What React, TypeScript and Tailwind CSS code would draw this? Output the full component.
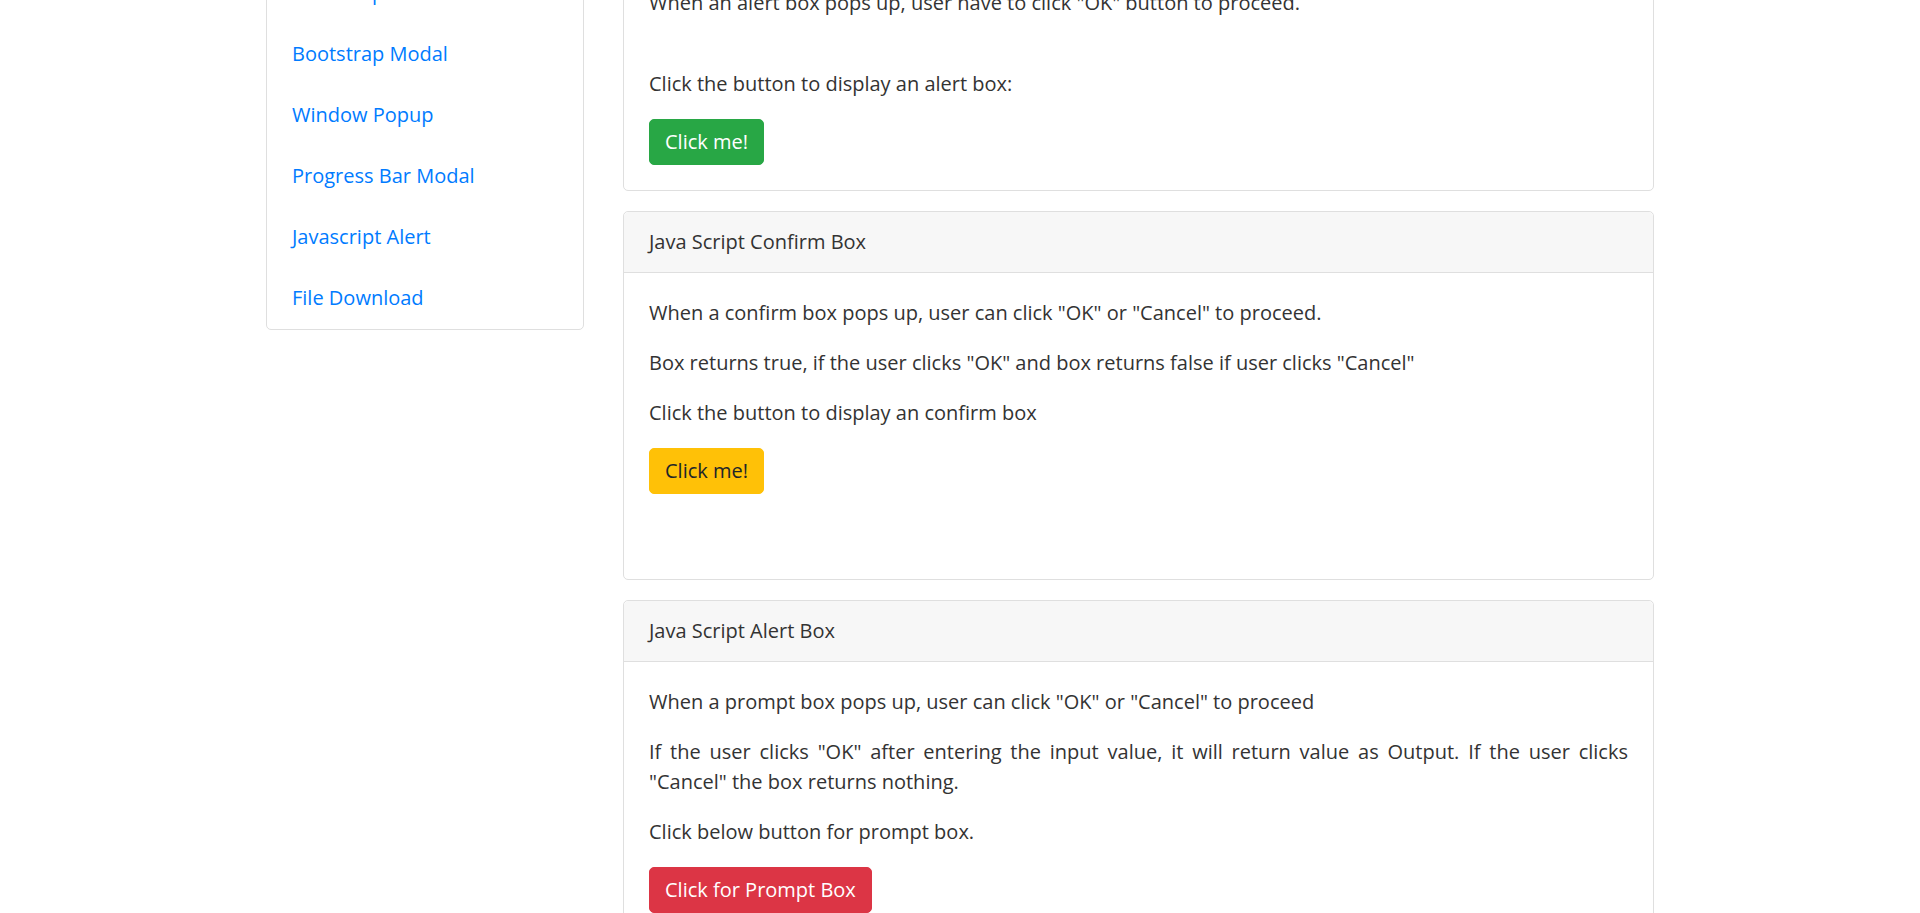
const sideLinks = [
  'Bootstrap Alerts',
  'Bootstrap Alerts',
  'Bootstrap Modal',
  'Window Popup',
  'Progress Bar Modal',
  'Javascript Alert',
  'File Download',
];

function CardHeader({ title }: { title: string }) {
  return (
    <div className="bg-[#f7f7f7] border-b border-[#dfdfdf] px-[25px] py-[15px] leading-[30px] rounded-t-[5px]">
      {title}
    </div>
  );
}

export default function App() {
  return (
    <div
      className="min-h-screen bg-white text-[20px] leading-[30px] text-[#333]"
      style={{ fontFamily: '"Open Sans", "Noto Sans", sans-serif' }}
    >
      <div className="-mt-[99px] flex items-start pl-[266px] gap-[39px]">
        {/* sidebar */}
        <div className="w-[318px] shrink-0 border border-[#dfdfdf] rounded-[5px] bg-white">
          {sideLinks.map((l, i) => (
            <div key={i} className="px-[25px] pt-[15px] pb-[16px] leading-[30px]">
              <a href="#" className="text-[#007bff] hover:underline">
                {l}
              </a>
            </div>
          ))}
        </div>

        {/* main */}
        <div className="w-[1031px] shrink-0 flex flex-col gap-[20px]">
          <div className="border border-[#dfdfdf] rounded-[5px]">
            <CardHeader title="Java Script Alert Box" />
            <div className="p-[25px]">
              <p className="mb-[51px]">When an alert box pops up, user have to click "OK" button to proceed.</p>
              <p className="mb-[20px]">Click the button to display an alert box:</p>
              <button className="bg-[#28a745] text-white border border-[#28a745] rounded-[5px] px-[15px] py-[7px] leading-[30px]">
                Click me!
              </button>
            </div>
          </div>

          <div className="border border-[#dfdfdf] rounded-[5px]">
            <CardHeader title="Java Script Confirm Box" />
            <div className="px-[25px] pt-[25px] pb-[85px]">
              <p className="mb-[20px]">When a confirm box pops up, user can click "OK" or "Cancel" to proceed.</p>
              <p className="mb-[20px]">
                Box returns true, if the user clicks "OK" and box returns false if user clicks "Cancel"
              </p>
              <p className="mb-[20px]">Click the button to display an confirm box</p>
              <button className="bg-[#ffc107] text-[#212529] border border-[#ffc107] rounded-[5px] px-[15px] py-[7px] leading-[30px]">
                Click me!
              </button>
            </div>
          </div>

          <div className="border border-[#dfdfdf] rounded-[5px]">
            <CardHeader title="Java Script Alert Box" />
            <div className="p-[25px]">
              <p className="mb-[20px]">When a prompt box pops up, user can click "OK" or "Cancel" to proceed</p>
              <p className="mb-[20px] text-justify">
                If the user clicks "OK" after entering the input value, it will return value as Output. If the user
                clicks "Cancel" the box returns nothing.
              </p>
              <p className="mb-[20px]">Click below button for prompt box.</p>
              <button className="bg-[#dc3545] text-white border border-[#dc3545] rounded-[5px] px-[15px] py-[7px] leading-[30px]">
                Click for Prompt Box
              </button>
            </div>
          </div>
        </div>
      </div>
    </div>
  );
}
